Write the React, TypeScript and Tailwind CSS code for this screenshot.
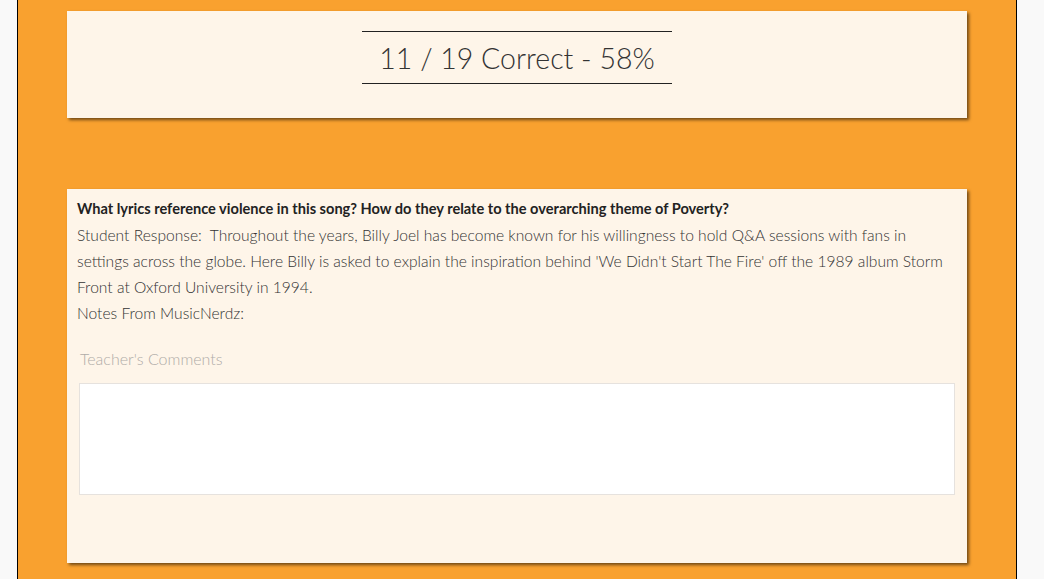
export default function App() {
  return (
    <div className="min-h-[579px] bg-[#f9f9f9] font-['Lato',sans-serif]">
      <div className="ml-[17px] min-h-[579px] w-[1000px] border-x border-black bg-[#f9a12f] px-[49px] pt-[11px]">
        {/* Score card */}
        <div className="flex h-[107px] items-start justify-center bg-[#fef5e9] pt-[20px] shadow-[2px_2px_3px_rgba(0,0,0,0.55)]">
          <div className="border-y border-[#222] px-[17px] pt-[1px] text-[28.5px] font-light leading-[50px] text-[#333]">
            11 / 19 Correct - 58%
          </div>
        </div>

        {/* Question card */}
        <div className="mt-[71px] h-[374px] bg-[#fef5e9] px-[10px] pt-[7px] text-[15.6px] leading-[26px] text-[#333] shadow-[2px_2px_3px_rgba(0,0,0,0.55)]">
          <p className="text-[14.6px] font-bold text-[#222]">
            What lyrics reference violence in this song? How do they relate to the overarching theme of Poverty?
          </p>
          <p className="font-light">
            Student Response:&nbsp; Throughout the years, Billy Joel has become known for his willingness to hold Q&amp;A sessions with fans in settings across the globe. Here Billy is asked to explain the inspiration behind 'We Didn't Start The Fire' off the 1989 album Storm Front at Oxford University in 1994.
          </p>
          <p className="font-light">Notes From MusicNerdz:</p>
          <div className="mt-[20px] px-[2px]">
            <label className="block pl-[1px] text-[16px] font-light text-[#b0aca8]">Teacher's Comments</label>
            <textarea className="mt-[11px] block h-[112px] w-full resize-none border border-[#e6e2de] bg-white" />
          </div>
        </div>
      </div>
    </div>
  );
}
